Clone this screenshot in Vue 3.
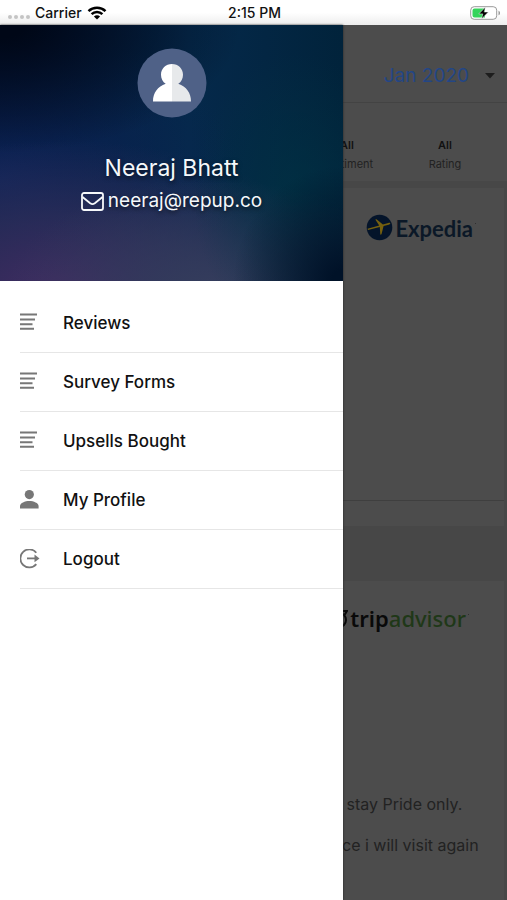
<script setup>
const items = [
  { label: 'Reviews', icon: 'list' },
  { label: 'Survey Forms', icon: 'list' },
  { label: 'Upsells Bought', icon: 'list' },
  { label: 'My Profile', icon: 'person' },
  { label: 'Logout', icon: 'logout' },
]
const filters = [
  { value: 'All', name: 'Sentiment' },
  { value: 'All', name: 'Rating' },
]
</script>

<template>
  <div class="app">
    <div class="status">
      <div class="carrier">
        <span class="dots"><i></i><i></i><i></i><i></i></span>
        <span>Carrier</span>
        <svg width="20" height="14" viewBox="0 0 20 14" fill="none" stroke="#000" stroke-width="2.5">
          <path d="M1.5 5.1C6.2.6 13.8.6 18.5 5.1" />
          <path d="M4.6 8.2c3-2.9 7.8-2.9 10.8 0" />
          <path d="M10 13.6 6.9 10.5c1.7-1.6 4.5-1.6 6.2 0z" fill="#000" stroke="none" />
        </svg>
      </div>
      <time>2:15 PM</time>
      <div class="battery">
        <svg width="31" height="14" viewBox="0 0 31 14">
          <rect x=".7" y=".7" width="26" height="12.6" rx="3.5" fill="#fff" stroke="#999" />
          <path d="M4.500 2.500H15v9H4.500a2 2 0 0 1-2-2v-5a2 2 0 0 1 2-2z" fill="#35d45b" />
          <path d="M28.500 4.700c2 .7 2 3.900 0 4.600z" fill="#999" />
          <path d="M15.500 1 8.800 7.900h4L11.500 13l6.900-7h-4.200z" fill="#000" stroke="#fff" stroke-width=".5" />
        </svg>
      </div>
    </div>

    <div class="stage">
      <main class="page">
        <header class="period">
          <button class="month" type="button">
            <span>Jan 2020</span>
            <svg width="10" height="6" viewBox="0 0 10 6"><path d="M0 0h10L5 5.500z" fill="#1d1d1d" /></svg>
          </button>
        </header>
        <div class="filters">
          <div v-for="f in filters" :key="f.name" class="filter">
            <strong>{{ f.value }}</strong>
            <span>{{ f.name }}</span>
          </div>
        </div>
        <section class="card first">
          <div class="expedia">
            <svg width="27" height="27" viewBox="0 0 27 27">
              <circle cx="13.500" cy="13.500" r="12.800" fill="#04142a" />
              <path d="m1.500 14.800 11.700-3.200-3.900-6 1.200-.3 6.400 5.300 5.400-1.700c1.500-.4 2.200.1 2 .7-.2.600-.8.900-1.700 1.100l-5 1.400-2.100 8.200-1.200.4-.5-7.700-11.800 2.900z" fill="#75600f" />
            </svg>
            <span>Expedia</span><i class="mark"></i>
          </div>
          <div class="foot"></div>
        </section>
        <section class="card second">
          <div class="trip">
            <svg width="22" height="22" viewBox="0 0 22 22" fill="none" stroke="#090909">
              <circle cx="13" cy="13" r="7" stroke-width="2" />
              <circle cx="13" cy="13" r="2.500" stroke-width="2" />
              <path d="M10 4h11l-2.500 4" stroke-width="2" />
            </svg>
            <span>trip<em>advisor</em></span><i class="mark"></i>
          </div>
          <p class="review"><span> stay Pride only.</span><span>ce i will visit again</span></p>
        </section>
      </main>

      <aside class="drawer">
        <div class="profile">
          <svg class="avatar" width="70" height="70" viewBox="0 0 70 70">
            <circle cx="35" cy="35" r="34.500" fill="#4f6187" />
            <path d="M35 16c-6.300 0-11 4.700-11 10.700 0 3.900 1.800 7.100 4.700 9.100C20.700 38.500 16 45 16 53.500h19z" fill="#fff" />
            <path d="M35 16c6.300 0 11 4.700 11 10.700 0 3.900-1.800 7.100-4.700 9.100C49.300 38.500 54 45 54 53.500H35z" fill="#e7e9eb" />
          </svg>
          <h1>Neeraj Bhatt</h1>
          <p class="email">
            <svg width="23" height="19" viewBox="0 0 23 19" fill="none" stroke="#f5f8fb" stroke-width="1.800" stroke-linejoin="round">
              <rect x="1" y="1" width="21" height="17" rx="2" />
              <path d="m1.500 5 7.700 6.200c1.600 1.200 3 1.200 4.600 0L21.500 5" />
            </svg>
            <span>neeraj@repup.co</span>
          </p>
        </div>
        <nav class="menu">
          <a v-for="item in items" :key="item.label" href="#">
            <svg v-if="item.icon === 'list'" width="20" height="20" viewBox="0 0 20 20" stroke="#777" stroke-width="2">
              <path d="M0 1.500h17M0 6.500h15M0 11.200h12.500M0 15.800h14" />
            </svg>
            <svg v-else-if="item.icon === 'person'" width="20" height="20" viewBox="0 0 20 20" fill="#777">
              <circle cx="9.300" cy="4.600" r="4.600" />
              <path d="M0 18.500V16c0-3 5-5 9.300-5s9.300 2 9.300 5v2.500z" />
            </svg>
            <svg v-else width="20" height="20" viewBox="0 0 20 20" fill="none" stroke="#777" stroke-width="1.800">
              <path d="M16.300 3.700A9 9 0 1 0 16.300 15.100" />
              <path d="M7 9.400h10" />
              <path d="M14.500 5.500 19.500 9.400l-5 3.900z" fill="#777" stroke="none" />
            </svg>
            <span>{{ item.label }}</span>
          </a>
        </nav>
      </aside>
    </div>
  </div>
</template>

<style>
body {
  margin: 0;
  background: #4c4c4c;
}
</style>

<style scoped>
.app {
  display: flex;
  flex-direction: column;
  min-height: 100vh;
  overflow: hidden;
  font-family: Inter, "Liberation Sans", sans-serif;
}
svg {
  display: block;
  flex: none;
}
.status {
  display: grid;
  grid-template-columns: 1fr auto 1fr;
  align-items: center;
  height: 25px;
  padding: 0 6px 0 8px;
  box-sizing: border-box;
  background: linear-gradient(#fff 50%, #ededed);
  color: #111;
  font-size: 14px;
  font-weight: 500;
}
.carrier {
  display: flex;
  align-items: center;
  gap: 5px;
}
.dots {
  display: flex;
  gap: 2px;
  padding-top: 8px;
}
.dots i {
  width: 4px;
  height: 4px;
  border-radius: 50%;
  background: #c4c4c4;
}
.battery {
  display: flex;
  justify-content: flex-end;
}
.stage {
  position: relative;
  display: flex;
  flex: 1;
}
.page {
  display: flex;
  flex: 1;
  flex-direction: column;
  min-width: 0;
  background: #474747;
  color: #222;
}
.period {
  display: flex;
  justify-content: flex-end;
  align-items: flex-end;
  height: 78px;
  padding: 0 12px 14px 0;
  box-sizing: border-box;
  border-bottom: 1px solid #434343;
  background: #4c4c4c;
}
.month {
  display: flex;
  align-items: center;
  gap: 16px;
  padding: 0;
  border: 0;
  background: none;
  color: #234686;
  font: 400 19px/24px Inter, "Liberation Sans", sans-serif;
}
.filters {
  display: flex;
  justify-content: flex-end;
  padding: 33px 13px 7px 0;
  background: #4c4c4c;
}
.filter {
  display: flex;
  flex-direction: column;
  align-items: center;
  width: 98px;
  font-size: 11px;
  line-height: 19px;
}
.filter strong {
  color: #111;
  font-weight: 600;
}
.card {
  display: flex;
  flex-direction: column;
  margin-right: 3px;
  background: #4c4c4c;
}
.first {
  height: 338px;
  margin-top: 7px;
}
.expedia,
.trip {
  display: flex;
  align-items: center;
  justify-content: flex-end;
  gap: 2px;
}
.expedia {
  padding: 23px 28px 0 0;
}
.expedia svg {
  margin-bottom: 4px;
}
.expedia span {
  color: #0b1827;
  font: 700 22px/36px Lato, sans-serif;
}
.mark {
  align-self: flex-start;
  width: 1px;
  height: 1px;
  margin-top: 12px;
  background: #303030;
}
.foot {
  height: 25px;
  margin-top: auto;
  border-top: 1px solid #3f3f3f;
}
.second {
  flex: 1;
  margin-top: 55px;
}
.trip {
  padding: 21px 35px 0 0;
}
.trip span {
  color: #090909;
  font: 600 22px/32px "Noto Sans", sans-serif;
}
.trip em {
  color: #1f3818;
  font-style: normal;
  font-weight: 500;
}
.review {
  display: flex;
  flex-direction: column;
  align-self: flex-end;
  width: 162px;
  margin: 150px 0 0;
  font-size: 16px;
  line-height: 41px;
  white-space: pre;
}
.drawer {
  position: absolute;
  top: 0;
  bottom: 0;
  left: 0;
  width: 343px;
  background: #fff;
  box-shadow: 0 0 2px #222;
}
.profile {
  display: flex;
  flex-direction: column;
  align-items: center;
  height: 256px;
  padding-top: 23px;
  box-sizing: border-box;
  background:
    radial-gradient(ellipse 70% 50% at 0 0, #000717 10%, #00071700 100%),
    radial-gradient(ellipse 32% 45% at 100% 100%, #001228 10%, #00122800 100%),
    radial-gradient(ellipse 30% 55% at 86% 66%, #00354499, #00354400),
    radial-gradient(ellipse 60% 45% at 62% 105%, #343c5c 10%, #343c5c00 100%),
    radial-gradient(ellipse 85% 60% at 18% 105%, #3d2c60 10%, #35305caa 50%, #2a315500 100%),
    radial-gradient(ellipse 70% 60% at 0 60%, #0c2356, #0c235600),
    linear-gradient(90deg, #03183c, #05294b 55%, #01233b);
  color: #f5f8fb;
  text-shadow: 0 2px 4px #0009;
}
h1 {
  margin: 33px 0 0;
  font-size: 23px;
  font-weight: 400;
  line-height: 34px;
}
.email {
  display: flex;
  align-items: center;
  gap: 4px;
  margin: 0;
  font-size: 19px;
  line-height: 32px;
}
.menu {
  display: flex;
  flex-direction: column;
  padding: 13px 0 0 20px;
}
.menu a {
  display: flex;
  align-items: center;
  gap: 23px;
  height: 59px;
  box-sizing: border-box;
  border-bottom: 1px solid #e6e6e6;
  color: #111;
  font-size: 17px;
  font-weight: 500;
  text-decoration: none;
}
</style>
